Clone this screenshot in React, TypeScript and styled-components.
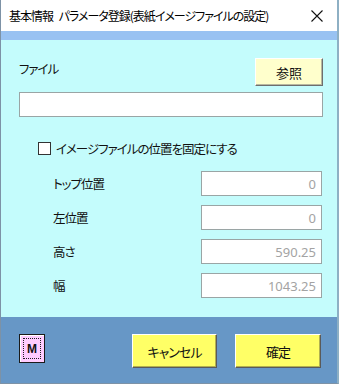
import * as React from 'react';
import styled, { createGlobalStyle } from 'styled-components';

const GlobalStyle = createGlobalStyle`
  html, body {
    margin: 0;
    padding: 0;
    background: #ffffff;
  }
  body {
    font-family: 'Noto Sans CJK JP', 'Noto Sans', sans-serif;
    font-feature-settings: 'palt';
  }
`;

const Colors = {
  cyan: '#c4fcfc',
  strip: '#99c2f2',
  footer: '#6797c6',
  frame: '#7d92a6',
  fieldBorder: '#9aa5a5',
  paleYellow: '#ffffcc',
  yellow: '#ffff66',
  pink: '#ffccff',
};

type Field = { label: string; value: string };

const fields: Field[] = [
  { label: 'トップ位置', value: '0' },
  { label: '左位置', value: '0' },
  { label: '高さ', value: '590.25' },
  { label: '幅', value: '1043.25' },
];

const CloseIcon = () => (
  <svg width='14' height='14' viewBox='0 0 14 14'>
    <path d='M1.5 1.5 L12.5 12.5 M12.5 1.5 L1.5 12.5' stroke='#111' strokeWidth='1.1' fill='none' />
  </svg>
);

export default function App() {
  const [fixed, setFixed] = React.useState(false);

  return (
    <>
      <GlobalStyle />
      <Window>
        <TitleBar>
          <Title>基本情報 パラメータ登録(表紙イメージファイルの設定)</Title>
          <CloseButton aria-label='閉じる'>
            <CloseIcon />
          </CloseButton>
        </TitleBar>
        <Strip />
        <Body>
          <FileRow>
            <FileLabel>ファイル</FileLabel>
            <BrowseButton>参照</BrowseButton>
          </FileRow>
          <PathBox />
          <CheckRow onClick={() => setFixed(!fixed)}>
            <CheckBox $checked={fixed} />
            <span>イメージファイルの位置を固定にする</span>
          </CheckRow>
          <FieldGrid>
            {fields.map((f) => (
              <React.Fragment key={f.label}>
                <FieldLabel>{f.label}</FieldLabel>
                <ValueBox>{f.value}</ValueBox>
              </React.Fragment>
            ))}
          </FieldGrid>
        </Body>
        <Footer>
          <MacroButton>
            <span>M</span>
          </MacroButton>
          <Actions>
            <ActionButton $width={85}>キャンセル</ActionButton>
            <ActionButton $width={86}>確定</ActionButton>
          </Actions>
        </Footer>
      </Window>
    </>
  );
}

const Window = styled.div`
  width: 339px;
  height: 384px;
  box-sizing: border-box;
  display: flex;
  flex-direction: column;
  border-left: 1px solid ${Colors.frame};
  border-right: 2px solid #8eb0c4;
  border-bottom: 1px solid ${Colors.frame};
  background: #fff;
`;

const TitleBar = styled.div`
  height: 31px;
  flex: none;
  display: flex;
  align-items: center;
  justify-content: space-between;
  padding: 0 0 0 8px;
  background: #fff;
`;

const Title = styled.div`
  font-size: 12px;
  letter-spacing: -1px;
  word-spacing: 4px;
  color: #000;
  white-space: nowrap;
  margin-top: -1px;
`;

const CloseButton = styled.div`
  width: 44px;
  height: 31px;
  display: flex;
  align-items: center;
  justify-content: center;
  margin-right: -2px;
`;

const Strip = styled.div`
  height: 9px;
  flex: none;
  background: ${Colors.strip};
`;

const Body = styled.div`
  flex: 1;
  background: ${Colors.cyan};
  padding: 18px 14px 0 18px;
  display: flex;
  flex-direction: column;
`;

const Text = styled.div`
  font-size: 12.5px;
  letter-spacing: -1px;
  color: #111;
`;

const FileRow = styled.div`
  display: flex;
  justify-content: space-between;
  align-items: flex-start;
  height: 28px;
`;

const FileLabel = styled(Text)`
  margin-top: 1px;
`;

const BrowseButton = styled(Text)`
  width: 68px;
  height: 28px;
  box-sizing: border-box;
  background: ${Colors.paleYellow};
  border: 1px solid;
  border-color: #ffffff #6e6e6e #6e6e6e #ffffff;
  box-shadow: inset -1px -1px 0 #b8b8a0;
  display: flex;
  align-items: center;
  justify-content: center;
  font-size: 13px;
  letter-spacing: 0;
`;

const PathBox = styled.div`
  margin-top: 6px;
  height: 25px;
  box-sizing: border-box;
  background: #fff;
  border: 1px solid ${Colors.fieldBorder};
`;

const CheckRow = styled.label`
  display: flex;
  align-items: center;
  gap: 5px;
  margin: 25px 0 0 19px;
  height: 13px;
  font-size: 12.5px;
  letter-spacing: -1px;
  color: #111;
  cursor: default;
`;

const CheckBox = styled.span<{ $checked: boolean }>`
  width: 13px;
  height: 13px;
  box-sizing: border-box;
  border: 1px solid #333;
  background: #fff;
  position: relative;
  &::after {
    content: '${(p) => (p.$checked ? '✓' : '')}';
    position: absolute;
    left: 1px;
    top: -3px;
    font-size: 11px;
  }
`;

const FieldGrid = styled.div`
  display: grid;
  grid-template-columns: 148px 121px;
  grid-auto-rows: 25px;
  row-gap: 9px;
  margin: 16px 0 0 34px;
  align-items: center;
`;

const FieldLabel = styled(Text)``;

const ValueBox = styled.div`
  height: 25px;
  box-sizing: border-box;
  background: #fff;
  border: 1px solid ${Colors.fieldBorder};
  display: flex;
  align-items: center;
  justify-content: flex-end;
  padding-right: 5px;
  font-family: 'Noto Sans', 'Liberation Sans', sans-serif;
  font-size: 13px;
  color: #a3a3a3;
`;

const Footer = styled.div`
  height: 66px;
  flex: none;
  box-sizing: border-box;
  background: ${Colors.footer};
  display: flex;
  align-items: flex-start;
  justify-content: space-between;
  padding: 17px 16px 0 18px;
`;

const MacroButton = styled.div`
  width: 26px;
  height: 29px;
  box-sizing: border-box;
  background: ${Colors.pink};
  border: 1px solid #1a1a1a;
  box-shadow: inset 1px 1px 0 #fff;
  display: flex;
  align-items: center;
  justify-content: center;
  span {
    width: 18px;
    height: 21px;
    box-sizing: border-box;
    border: 1px dotted #222;
    display: flex;
    align-items: center;
    justify-content: center;
    font-family: 'Liberation Sans', Arial, sans-serif;
    font-weight: bold;
    font-size: 12px;
    color: #111;
  }
`;

const Actions = styled.div`
  display: flex;
  gap: 18px;
`;

const ActionButton = styled(Text)<{ $width: number }>`
  width: ${(p) => p.$width}px;
  height: 34px;
  box-sizing: border-box;
  background: ${Colors.yellow};
  border: 1px solid;
  border-color: #ffffff #5a5a5a #5a5a5a #ffffff;
  box-shadow: inset -1px -1px 0 #b0b050;
  display: flex;
  align-items: center;
  justify-content: center;
  font-size: 13px;
`;
